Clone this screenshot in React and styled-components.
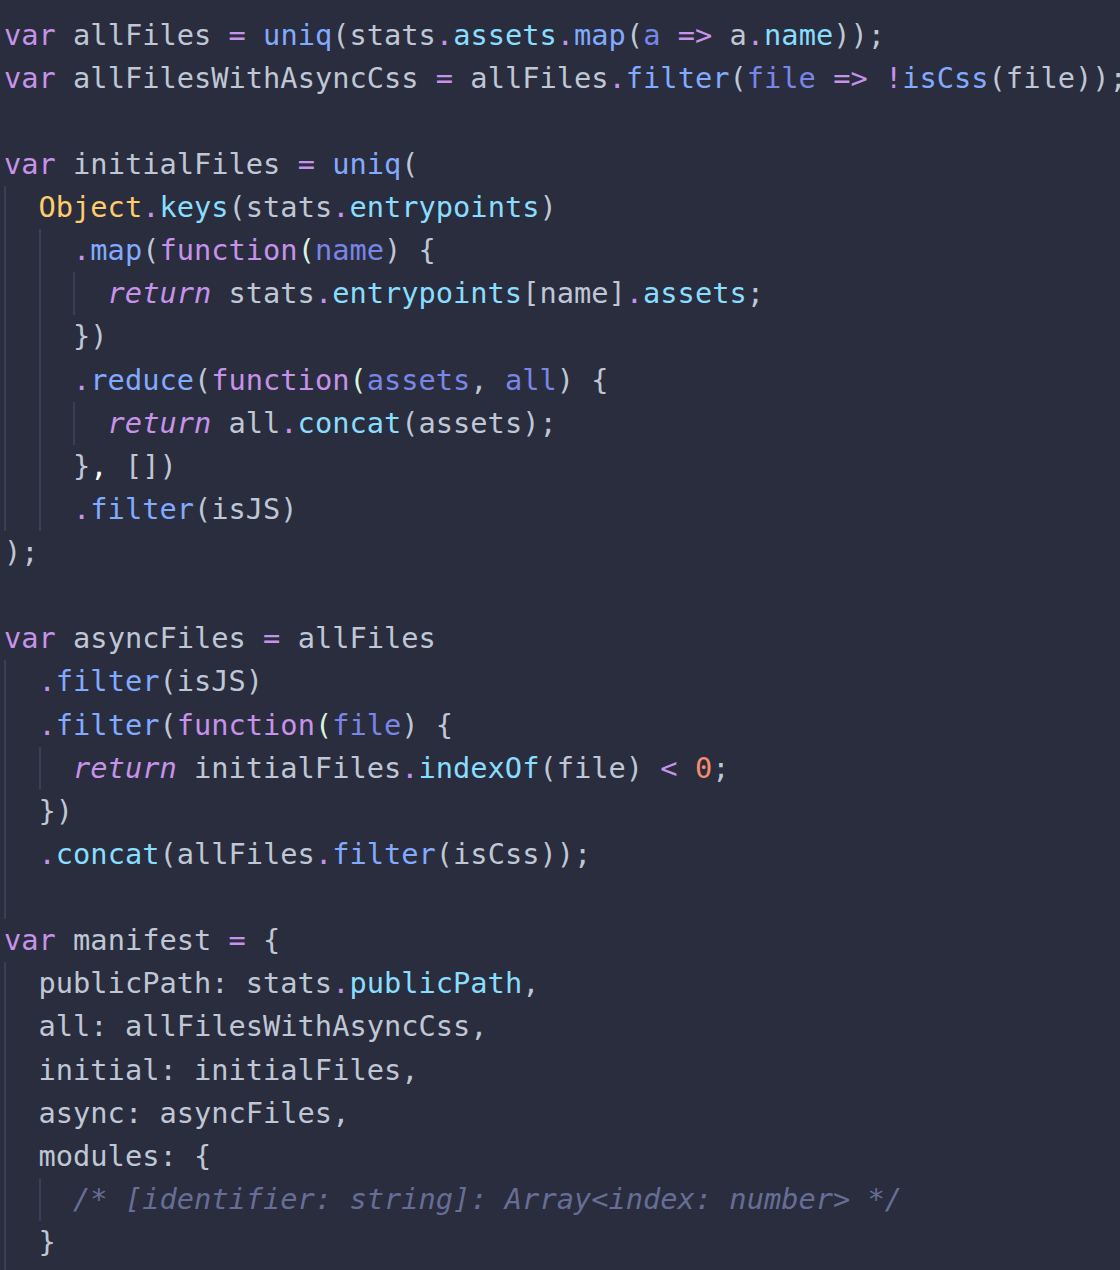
import React from "react";
import styled, { createGlobalStyle } from "styled-components";

const GlobalStyle = createGlobalStyle`
  html, body {
    margin: 0;
    padding: 0;
    background: #292d3e;
  }
`;

const colors = {
  t: "#bfc7d5",
  k: "#c792ea",
  o: "#c792ea",
  f: "#82aaff",
  p: "#89ddff",
  a: "#7986e7",
  c: "#ffcb6b",
  n: "#f78c6c",
  m: "#676e95",
  g: "#d9f5dd",
  w: "#ffffff",
};

// [level, tokens]; token = [type, text]; "ki" = italic keyword
const lines = [
  [0, [["k", "var"], ["t", " allFiles "], ["o", "="], ["t", " "], ["f", "uniq"], ["t", "(stats"], ["o", "."], ["p", "assets"], ["o", "."], ["f", "map"], ["t", "("], ["a", "a"], ["t", " "], ["o", "=>"], ["t", " a"], ["o", "."], ["p", "name"], ["t", "));"]]],
  [0, [["k", "var"], ["t", " allFilesWithAsyncCss "], ["o", "="], ["t", " allFiles"], ["o", "."], ["f", "filter"], ["t", "("], ["a", "file"], ["t", " "], ["o", "=>"], ["t", " "], ["o", "!"], ["f", "isCss"], ["t", "(file));"]]],
  [0, []],
  [0, [["k", "var"], ["t", " initialFiles "], ["o", "="], ["t", " "], ["f", "uniq"], ["t", "("]]],
  [1, [["c", "Object"], ["o", "."], ["p", "keys"], ["t", "(stats"], ["o", "."], ["p", "entrypoints"], ["t", ")"]]],
  [2, [["o", "."], ["f", "map"], ["t", "("], ["k", "function"], ["g", "("], ["a", "name"], ["t", ") {"]]],
  [3, [["ki", "return"], ["t", " stats"], ["o", "."], ["p", "entrypoints"], ["t", "[name]"], ["o", "."], ["p", "assets"], ["t", ";"]]],
  [2, [["t", "})"]]],
  [2, [["o", "."], ["f", "reduce"], ["t", "("], ["k", "function"], ["g", "("], ["a", "assets"], ["t", ", "], ["a", "all"], ["t", ") {"]]],
  [3, [["ki", "return"], ["t", " all"], ["o", "."], ["p", "concat"], ["t", "(assets);"]]],
  [2, [["t", "}"], ["w", ","], ["t", " [])"]]],
  [2, [["o", "."], ["f", "filter"], ["t", "(isJS)"]]],
  [0, [["t", ");"]]],
  [0, []],
  [0, [["k", "var"], ["t", " asyncFiles "], ["o", "="], ["t", " allFiles"]]],
  [1, [["o", "."], ["f", "filter"], ["t", "(isJS)"]]],
  [1, [["o", "."], ["f", "filter"], ["t", "("], ["k", "function"], ["g", "("], ["a", "file"], ["t", ") {"]]],
  [2, [["ki", "return"], ["t", " initialFiles"], ["o", "."], ["p", "indexOf"], ["t", "(file) "], ["o", "<"], ["t", " "], ["n", "0"], ["t", ";"]]],
  [1, [["t", "})"]]],
  [1, [["o", "."], ["p", "concat"], ["t", "(allFiles"], ["o", "."], ["f", "filter"], ["t", "(isCss));"]]],
  [1, []],
  [0, [["k", "var"], ["t", " manifest "], ["o", "="], ["t", " {"]]],
  [1, [["t", "publicPath: stats"], ["o", "."], ["p", "publicPath"], ["t", ","]]],
  [1, [["t", "all: allFilesWithAsyncCss,"]]],
  [1, [["t", "initial: initialFiles,"]]],
  [1, [["t", "async: asyncFiles,"]]],
  [1, [["t", "modules: {"]]],
  [2, [["m", "/* [identifier: string]: Array<index: number> */"]]],
  [1, [["t", "}"]]],
  [1, []],
];

const Editor = styled.div`
  height: 1270px;
  overflow: hidden;
  background: #292d3e;
  padding: 13.5px 0 0 4px;
  box-sizing: border-box;
  font-family: "DejaVu Sans Mono", "Liberation Mono", monospace;
  font-size: 28.7px;
  line-height: 43.14px;
  color: #bfc7d5;
`;

const Line = styled.div`
  display: flex;
  height: 43.14px;
  white-space: pre;
`;

const Guide = styled.span`
  flex: none;
  width: 2ch;
  box-sizing: border-box;
  border-left: 2px solid #3b3f56;
`;

const Token = styled.span`
  color: ${(p) => colors[p.$kind] || colors.t};
  font-style: ${(p) => (p.$italic ? "italic" : "normal")};
`;

const CodeLine = ({ level, tokens }) => (
  <Line>
    {Array.from({ length: level }).map((_, i) => (
      <Guide key={i} />
    ))}
    {tokens.map(([kind, text], i) => (
      <Token
        key={i}
        $kind={kind === "ki" ? "k" : kind}
        $italic={kind === "ki" || kind === "m"}
      >
        {text}
      </Token>
    ))}
  </Line>
);

export default function App() {
  return (
    <>
      <GlobalStyle />
      <Editor>
        {lines.map(([level, tokens], i) => (
          <CodeLine key={i} level={level} tokens={tokens} />
        ))}
      </Editor>
    </>
  );
}
